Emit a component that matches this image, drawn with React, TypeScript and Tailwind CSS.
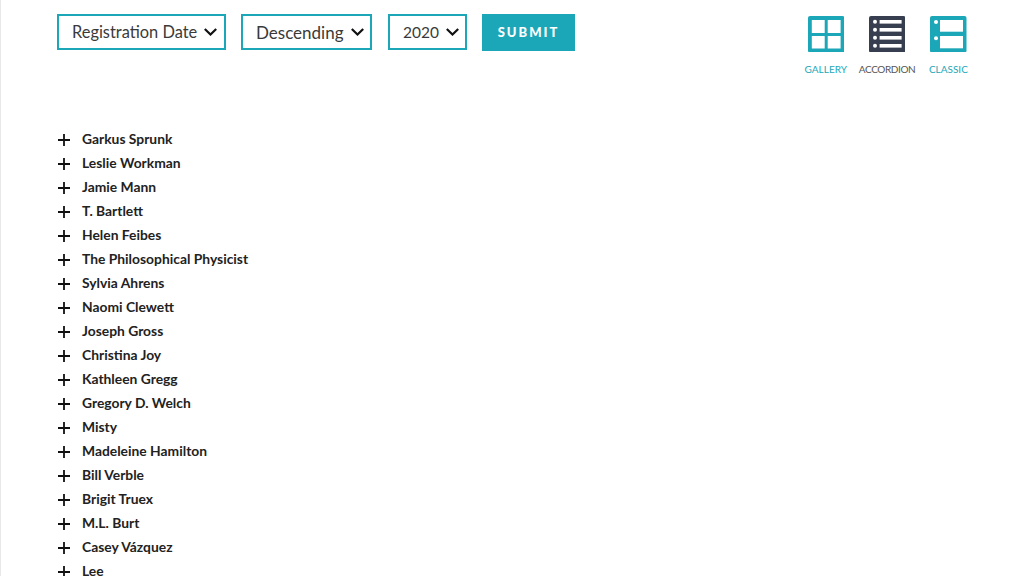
const names = ["Garkus Sprunk","Leslie Workman","Jamie Mann","T. Bartlett","Helen Feibes","The Philosophical Physicist","Sylvia Ahrens","Naomi Clewett","Joseph Gross","Christina Joy","Kathleen Gregg","Gregory D. Welch","Misty","Madeleine Hamilton","Bill Verble","Brigit Truex","M.L. Burt","Casey Vázquez","Lee"];

function Chevron() {
  return (
    <svg width="13" height="8" viewBox="0 0 13 8" fill="none" stroke="#111" strokeWidth="2.2">
      <path d="M0.8 1 L6.5 6.5 L12.2 1" />
    </svg>
  );
}

function Sel({ label, w, text, gap }: { label: string; w: string; text: string; gap: string }) {
  return (
    <div className={`flex items-center h-[36px] pl-[13px] border-2 border-[#1ca7b8] bg-white ${w} ${gap}`}>
      <span className={`pt-[1px] text-[#3a3a3a] ${text} whitespace-nowrap`}>{label}</span>
      <Chevron />
    </div>
  );
}

function Gallery() {
  return (
    <svg width="36.5" height="36.5" viewBox="0 0 36.5 36.5">
      <rect width="36.5" height="36.5" rx="2" fill="#1ca7b8" />
      <rect x="3.8" y="4" width="12.9" height="13" fill="#fff" />
      <rect x="19.7" y="4" width="12.9" height="13" fill="#fff" />
      <rect x="3.8" y="20" width="12.9" height="12.5" fill="#fff" />
      <rect x="19.7" y="20" width="12.9" height="12.5" fill="#fff" />
    </svg>
  );
}

function Accordion() {
  return (
    <svg width="36.5" height="36.5" viewBox="0 0 36.5 36.5">
      <rect width="36.5" height="36.5" rx="2" fill="#373e50" />
      {[5.8, 13.8, 21.8, 29.8].map((y) => (
        <g key={y} fill="#fff">
          <circle cx="6" cy={y} r="2" />
          <rect x="10.6" y={y - 1.8} width="22" height="3.6" />
        </g>
      ))}
    </svg>
  );
}

function Classic() {
  return (
    <svg width="36.5" height="36.5" viewBox="0 0 36.5 36.5">
      <rect width="36.5" height="36.5" rx="2" fill="#1ca7b8" />
      <circle cx="6" cy="6" r="2" fill="#fff" />
      <circle cx="6" cy="22.3" r="2" fill="#fff" />
      <rect x="10" y="4" width="23" height="11.7" fill="#fff" />
      <rect x="10" y="20" width="23" height="12.3" fill="#fff" />
    </svg>
  );
}

function View({ icon, label, color }: { icon: React.ReactNode; label: string; color: string }) {
  return (
    <div className="flex flex-col items-center w-[61.3px]">
      {icon}
      <span className={`mt-[11px] text-[10px] leading-[12px] whitespace-nowrap ${color}`}>{label}</span>
    </div>
  );
}

export default function App() {
  return (
    <div className="h-[576px] w-[1024px] overflow-hidden bg-white border-l border-[#e8e8e8] font-['Lato','Liberation_Sans',sans-serif]">
      <div className="flex justify-between pl-[56px] pr-[45px] pt-[14px]">
        <div className="flex items-start gap-[15px]">
          <Sel label="Registration Date" w="w-[169px]" text="text-[16.4px]" gap="gap-[7px]" />
          <Sel label="Descending" w="w-[131px]" text="text-[17px]" gap="gap-[7px]" />
          <Sel label="2020" w="w-[79px] ml-[1px]" text="text-[15.5px]" gap="gap-[7px]" />
          <button className="h-[37px] w-[93px] pt-[1px] bg-[#1ca7b8] text-white text-[13px] font-black tracking-[2px]">SUBMIT</button>
        </div>
        <div className="flex pt-[1.5px]">
          <View icon={<Gallery />} label="GALLERY" color="text-[#1ca7b8]" />
          <View icon={<Accordion />} label="ACCORDION" color="text-[#555] tracking-[-0.4px]" />
          <View icon={<Classic />} label="CLASSIC" color="text-[#1ca7b8]" />
        </div>
      </div>
      <ul className="mt-[52px] pl-[56px]">
        {names.map((n) => (
          <li key={n} className="flex items-center h-[24px]">
            <svg width="12" height="12" viewBox="0 0 12 12" className="mt-[2px] ml-[1px]" stroke="#111" strokeWidth="1.8">
              <path d="M6 0 V12 M0 6 H12" />
            </svg>
            <span className="ml-[12px] text-[13.85px] font-bold text-[#222]">{n}</span>
          </li>
        ))}
      </ul>
    </div>
  );
}
